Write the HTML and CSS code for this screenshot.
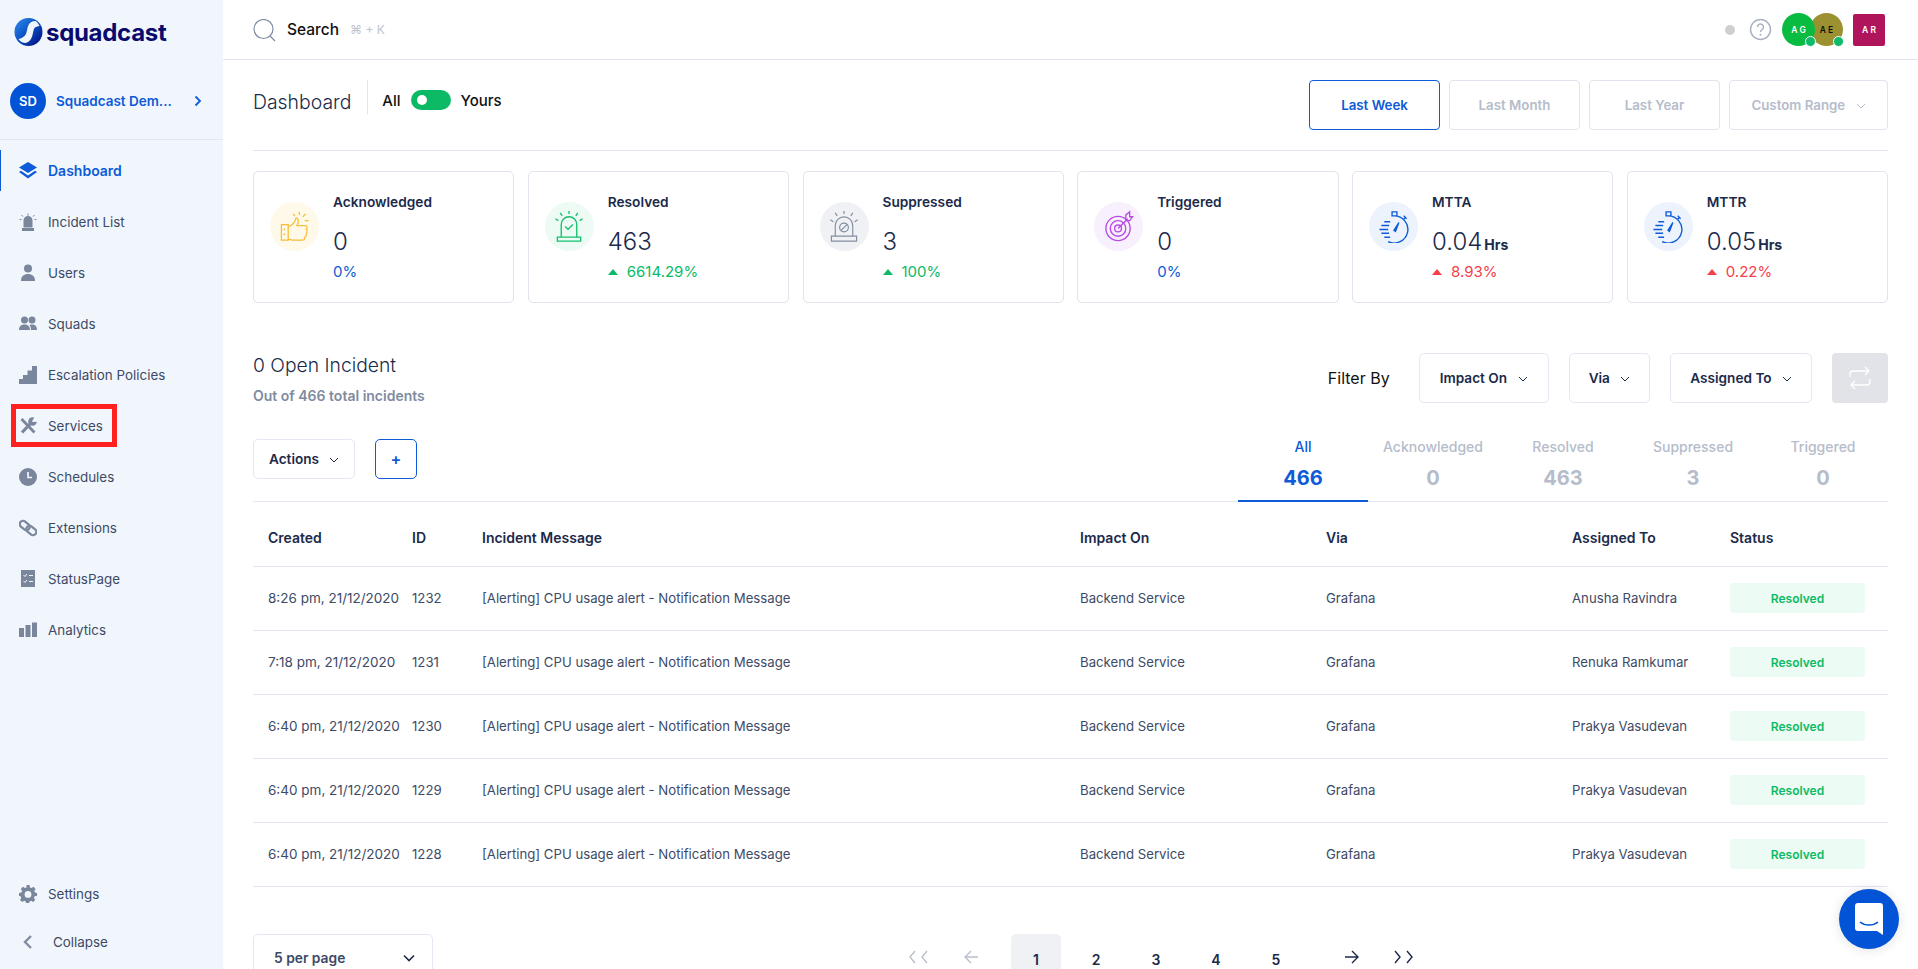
FILE: index.html
```html
<!DOCTYPE html>
<html>
  <head>
    <meta charset="UTF-8" />
    <title>Squadcast Dashboard</title>
    <link rel="stylesheet" href="styles.css">
  </head>
  <body>
    <div class="app">
      <aside class="sidebar">
        <div class="logo">
          <svg class="logo-mark" viewBox="0 0 28 28" width="29" height="28">
            <defs>
              <linearGradient id="logoFill" x1="0" y1="0" x2="1" y2="1">
                <stop offset="0" stop-color="#2f8df0" />
                <stop offset="0.5" stop-color="#0a4fc0" />
                <stop offset="1" stop-color="#06057a" />
              </linearGradient>
            </defs>
            <circle cx="14" cy="14" r="14" fill="url(#logoFill)" />
            <path d="M21 3c-5 0-7 3-8 7s-1 6-3 8-5 3-6 3c2 3 5 4 7 4 4-1 6-4 7-8s1-6 2-7 3-2 5-2c-1-2-2-4-4-5z" fill="#f1f6fd" />
          </svg>
          <span class="logo-text">squadcast</span>
        </div>

        <div class="org">
          <span class="org-avatar">SD</span>
          <span class="org-name">Squadcast Dem...</span>
          <svg class="org-arrow" viewBox="0 0 8 12" width="8" height="12"><path d="M1.5 1.5 6 6l-4.5 4.500" fill="none" stroke="#0d5bd7" stroke-width="1.8" /></svg>
        </div>

        <nav class="nav">
          <a class="nav-item active">
            <svg viewBox="0 0 18 18" width="18" height="18"><path d="M9 0 18 5.5 9 11 0 5.5z" /><path d="M2 8.800 0 10 9 16.500 18 10l-2-1.200L9 13.500z" /></svg>
            Dashboard
          </a>
          <a class="nav-item">
            <svg viewBox="0 0 18 18" width="18" height="18"><path d="M4.500 7.500a4.500 4.500 0 0 1 9 0V14.500h-9zM3 15h12v3H3z" /><path d="M9 .5v2.200M2.500 2l1.500 1.600M15.500 2 14 3.600M.5 6.500h2M15.500 6.500h2" stroke="#7a869c" fill="none" /></svg>
            Incident List
          </a>
          <a class="nav-item">
            <svg viewBox="0 0 18 18" width="18" height="18"><circle cx="9" cy="4.500" r="4" /><path d="M2 17c0-5 3-7 7-7s7 2 7 7z" /></svg>
            Users
          </a>
          <a class="nav-item">
            <svg viewBox="0 0 18 18" width="18" height="18"><circle cx="5.500" cy="5" r="3.500" /><circle cx="13" cy="5" r="3.500" /><path d="M0 15c0-4 2.500-5.500 5.500-5.500S11 11 11 15zM12 15c0-2-.5-3.800-1.500-5 .8-.4 1.600-.5 2.500-.5 3 0 5 1.500 5 5.500z" /></svg>
            Squads
          </a>
          <a class="nav-item">
            <svg viewBox="0 0 18 18" width="18" height="18"><path d="M13 0h5v18H0v-5h4V9h4.500V4.500H13z" /></svg>
            Escalation Policies
          </a>
          <a class="nav-item boxed">
            <svg viewBox="0 0 18 18" width="18" height="18"><path d="M2.500 2 15.500 15.500" fill="none" stroke="#7a869c" stroke-width="2.800" /><path d="M3 15.500 12 6" fill="none" stroke="#7a869c" stroke-width="3.200" /><circle cx="13.500" cy="4.500" r="4.300" /><path d="M12.800 4.800 15.500 0 19 1 17.500 5z" fill="#f1f6fd" /></svg>
            Services
          </a>
          <a class="nav-item">
            <svg viewBox="0 0 18 18" width="18" height="18"><circle cx="9" cy="9" r="9" /><path d="M9 4v5.500h4" fill="none" stroke="#f1f6fd" stroke-width="1.700" /></svg>
            Schedules
          </a>
          <a class="nav-item">
            <svg viewBox="0 0 18 18" width="18" height="18"><rect x="0.200" y="3.200" width="11" height="6.600" rx="3.300" transform="rotate(40 5.700 6.500)" fill="none" stroke="#7a869c" stroke-width="2.200" /><rect x="6.800" y="8.200" width="11" height="6.600" rx="3.300" transform="rotate(40 12.300 11.500)" fill="none" stroke="#7a869c" stroke-width="2.200" /></svg>
            Extensions
          </a>
          <a class="nav-item">
            <svg viewBox="0 0 18 18" width="18" height="18"><path d="M2 0h14v17H2z" /><path d="M4.500 5 6 6.500 8 4M4.500 11 6 12.500 8 10M10 5.500h4M10 11.500h4" fill="none" stroke="#f1f6fd" /></svg>
            StatusPage
          </a>
          <a class="nav-item">
            <svg viewBox="0 0 18 18" width="18" height="18"><path d="M0 7h5v9H0zM6.500 4h5v12h-5zM13 1.500h5V16h-5z" /></svg>
            Analytics
          </a>
        </nav>

        <div class="sidebar-foot">
          <a class="nav-item">
            <svg viewBox="0 0 18 18" width="18" height="18"><path fill-rule="evenodd" d="M7.500 0h3l.4 2.400 1.500.7 2.100-1.300 2.100 2.100-1.300 2.100.7 1.500L18 7.900v3l-2.400.4-.7 1.500 1.300 2.100-2.100 2.100-2.100-1.300-1.500.7-.4 2.400h-3l-.4-2.400-1.500-.7-2.100 1.300-2.100-2.100 1.300-2.100-.7-1.500L0 10.900v-3l2.400-.4.700-1.500-1.300-2.100 2.100-2.100 2.100 1.300 1.500-.7zM9 6a3.400 3.400 0 1 0 0 6.800A3.400 3.400 0 0 0 9 6z" /></svg>
            Settings
          </a>
          <a class="nav-item collapse">
            <svg viewBox="0 0 10 14" width="10" height="14"><path d="M8 1 2 7l6 6" fill="none" stroke="#848d9e" stroke-width="2.400" /></svg>
            Collapse
          </a>
        </div>
      </aside>

      <main class="main">
        <header class="topbar">
          <svg class="search-icon" viewBox="0 0 23 23" width="23" height="23"><circle cx="10.500" cy="10" r="9.500" fill="none" stroke="#7f8ca3" stroke-width="1.200" /><path d="m17 17 5 5" stroke="#7f8ca3" stroke-width="1.200" /></svg>
          <span class="search-label">Search</span>
          <span class="search-hint">⌘ + K</span>
          <div class="topbar-right">
            <span class="status-dot"></span>
            <svg class="help" viewBox="0 0 23 23" width="23" height="23"><circle cx="11.500" cy="11.500" r="10" fill="none" stroke="#aab2c2" stroke-width="1.500" /><path d="M8.500 9a3 3 0 1 1 4.600 2.500c-1 .7-1.600 1.200-1.600 2.500" fill="none" stroke="#aab2c2" stroke-width="1.500" /><circle cx="11.500" cy="16.800" r="1" fill="#aab2c2" /></svg>
            <div class="avatars">
              <span class="avatar green">A G<i class="online"></i></span>
              <span class="avatar olive">A E<i class="online"></i></span>
            </div>
            <span class="avatar square">A R</span>
          </div>
        </header>

        <div class="content">
          <div class="page-head">
            <h1>Dashboard</h1>
            <div class="scope">
              <span>All</span>
              <span class="switch"></span>
              <span>Yours</span>
            </div>
            <div class="ranges">
              <button class="range selected">Last Week</button>
              <button class="range">Last Month</button>
              <button class="range">Last Year</button>
              <button class="range custom">Custom Range <svg class="chev" viewBox="0 0 10 6" width="10" height="6"><path d="m1 1 4 4 4-4" fill="none" stroke="#b5bccb" /></svg></button>
            </div>
          </div>

          <section class="cards">
            <div class="card">
              <span class="card-icon yellow">
                <svg viewBox="0 0 30 34" width="30" height="34" fill="none" stroke="#f7bd35" stroke-width="1.300"><path d="M1 15h7v16H1zM8 17c4-1 7-4 8-9 2 0 3 2 2 6l-1 2h9c2 0 2 4 0 4 2 0 2 4 0 4 1 0 1 4-1 4 0 3-1 3-3 3H12l-4-1M4 19v2M4 24v2M19 2l1 3M26 4l-3 3M29 11h-4M13 4l2 2" /></svg>
              </span>
              <div class="card-body">
                <div class="card-title">Acknowledged</div>
                <div class="card-value">0</div>
                <div class="card-delta blue">0%</div>
              </div>
            </div>
            <div class="card">
              <span class="card-icon green">
                <svg viewBox="0 0 30 34" width="30" height="34" fill="none" stroke="#12c06d" stroke-width="1.400"><path d="M7 28V15a8 8 0 0 1 16 0v13M3 28h24v4H3zM15 1v3M6 3l2 3M24 3l-2 3M1 9l3 2M29 9l-3 2M11 17l3 3 5-5" /></svg>
              </span>
              <div class="card-body">
                <div class="card-title">Resolved</div>
                <div class="card-value">463</div>
                <div class="card-delta up"><i class="tri"></i>6614.29%</div>
              </div>
            </div>
            <div class="card">
              <span class="card-icon grey">
                <svg viewBox="0 0 30 34" width="30" height="34" fill="none" stroke="#838da0" stroke-width="1.200"><path d="M6 27V16a9 9 0 0 1 18 0v11M2 27h26v5H2zM15 1v3M6 3l2 3M24 3l-2 3M1 10l3 2M29 10l-3 2M11.800 21.200l6.400-6.400" /><circle cx="15" cy="18" r="4.500" /></svg>
              </span>
              <div class="card-body">
                <div class="card-title">Suppressed</div>
                <div class="card-value">3</div>
                <div class="card-delta up"><i class="tri"></i>100%</div>
              </div>
            </div>
            <div class="card">
              <span class="card-icon purple">
                <svg viewBox="0 0 30 34" width="30" height="34" fill="none" stroke="#b84be8" stroke-width="1.400"><circle cx="14" cy="19" r="12.500" /><circle cx="14" cy="19" r="8" /><circle cx="14" cy="19" r="3.500" /><path d="m14 19 10-10M22 11V5l4-3v5h3l-3 4z" /></svg>
              </span>
              <div class="card-body">
                <div class="card-title">Triggered</div>
                <div class="card-value">0</div>
                <div class="card-delta blue">0%</div>
              </div>
            </div>
            <div class="card">
              <span class="card-icon sky">
                <svg viewBox="0 0 32 34" width="32" height="34" fill="none" stroke="#0d5bd7" stroke-width="1.400"><path d="M16 6a14 14 0 1 1-6 26.500M14 2h5v4h-5zM26 6l3 3M25.500 10l2-2" /><path d="M6 12h6M3 16h8M1 20h9M3 24h8M6 28h6" stroke-width="1.500" /><path d="m21 13-5 8 1.500 1z" fill="#0d5bd7" /></svg>
              </span>
              <div class="card-body">
                <div class="card-title">MTTA</div>
                <div class="card-value">0.04<small>Hrs</small></div>
                <div class="card-delta down"><i class="tri"></i>8.93%</div>
              </div>
            </div>
            <div class="card">
              <span class="card-icon sky">
                <svg viewBox="0 0 32 34" width="32" height="34" fill="none" stroke="#0d5bd7" stroke-width="1.400"><path d="M16 6a14 14 0 1 1-6 26.500M14 2h5v4h-5zM26 6l3 3M25.500 10l2-2" /><path d="M6 12h6M3 16h8M1 20h9M3 24h8M6 28h6" stroke-width="1.500" /><path d="m21 13-5 8 1.500 1z" fill="#0d5bd7" /></svg>
              </span>
              <div class="card-body">
                <div class="card-title">MTTR</div>
                <div class="card-value">0.05<small>Hrs</small></div>
                <div class="card-delta down"><i class="tri"></i>0.22%</div>
              </div>
            </div>
          </section>

          <section class="incidents-head">
            <div>
              <h2>0 Open Incident</h2>
              <p>Out of 466 total incidents</p>
            </div>
            <div class="filters">
              <span class="filter-label">Filter By</span>
              <button class="filter impact">Impact On <svg class="chev" viewBox="0 0 10 6" width="10" height="6"><path d="m1 1 4 4 4-4" fill="none" stroke="#1c2a4a" /></svg></button>
              <button class="filter">Via <svg class="chev" viewBox="0 0 10 6" width="10" height="6"><path d="m1 1 4 4 4-4" fill="none" stroke="#1c2a4a" /></svg></button>
              <button class="filter">Assigned To <svg class="chev" viewBox="0 0 10 6" width="10" height="6"><path d="m1 1 4 4 4-4" fill="none" stroke="#1c2a4a" /></svg></button>
              <button class="refresh">
                <svg viewBox="0 0 22 24" width="22" height="24" fill="none" stroke="#fff" stroke-width="1.300"><path d="M1 11V8a3 3 0 0 1 3-3h16M16 1l4 4-4 4M21 13v3a3 3 0 0 1-3 3H2M6 15l-4 4 4 4" /></svg>
              </button>
            </div>
          </section>

          <section class="tabs-row">
            <div class="actions">
              <button class="filter small">Actions <svg class="chev" viewBox="0 0 10 6" width="10" height="6"><path d="m1 1 4 4 4-4" fill="none" stroke="#1c2a4a" /></svg></button>
              <button class="add">+</button>
            </div>
            <div class="tabs">
              <div class="tab current"><span>All</span><b>466</b></div>
              <div class="tab"><span>Acknowledged</span><b>0</b></div>
              <div class="tab"><span>Resolved</span><b>463</b></div>
              <div class="tab"><span>Suppressed</span><b>3</b></div>
              <div class="tab"><span>Triggered</span><b>0</b></div>
            </div>
          </section>

          <table class="incidents">
            <thead>
              <tr>
                <th class="col-created">Created</th>
                <th class="col-id">ID</th>
                <th class="col-message">Incident Message</th>
                <th class="col-impact">Impact On</th>
                <th class="col-via">Via</th>
                <th class="col-assigned">Assigned To</th>
                <th class="col-status">Status</th>
              </tr>
            </thead>
            <tbody>
              <tr>
                <td>8:26 pm, 21/12/2020</td><td>1232</td><td>[Alerting] CPU usage alert - Notification Message</td><td>Backend Service</td><td>Grafana</td><td>Anusha Ravindra</td><td><span class="pill">Resolved</span></td>
              </tr>
              <tr>
                <td>7:18 pm, 21/12/2020</td><td>1231</td><td>[Alerting] CPU usage alert - Notification Message</td><td>Backend Service</td><td>Grafana</td><td>Renuka Ramkumar</td><td><span class="pill">Resolved</span></td>
              </tr>
              <tr>
                <td>6:40 pm, 21/12/2020</td><td>1230</td><td>[Alerting] CPU usage alert - Notification Message</td><td>Backend Service</td><td>Grafana</td><td>Prakya Vasudevan</td><td><span class="pill">Resolved</span></td>
              </tr>
              <tr>
                <td>6:40 pm, 21/12/2020</td><td>1229</td><td>[Alerting] CPU usage alert - Notification Message</td><td>Backend Service</td><td>Grafana</td><td>Prakya Vasudevan</td><td><span class="pill">Resolved</span></td>
              </tr>
              <tr>
                <td>6:40 pm, 21/12/2020</td><td>1228</td><td>[Alerting] CPU usage alert - Notification Message</td><td>Backend Service</td><td>Grafana</td><td>Prakya Vasudevan</td><td><span class="pill">Resolved</span></td>
              </tr>
            </tbody>
          </table>

          <div class="table-foot">
            <button class="per-page">5 per page <svg viewBox="0 0 12 8" width="12" height="8"><path d="m1 1.500 5 5 5-5" fill="none" stroke="#1c2a4a" stroke-width="1.600" /></svg></button>
            <div class="pager">
              <span class="pager-arrow first">
                <svg viewBox="0 0 22 14" width="22" height="14" fill="none" stroke="#b9bfcc" stroke-width="1.400"><path d="M7 1 2 7l5 6M19 1l-5 6 5 6" /></svg>
              </span>
              <span class="pager-arrow prev">
                <svg viewBox="0 0 16 14" width="16" height="14" fill="none" stroke="#b9bfcc" stroke-width="1.400"><path d="M8 1 2 7l6 6M2 7h13" /></svg>
              </span>
              <span class="page current">1</span>
              <span class="page">2</span>
              <span class="page">3</span>
              <span class="page">4</span>
              <span class="page">5</span>
              <span class="pager-arrow next">
                <svg viewBox="0 0 16 14" width="16" height="14" fill="none" stroke="#1c2a4a" stroke-width="1.400"><path d="m8 1 6 6-6 6M1 7h13" /></svg>
              </span>
              <span class="pager-arrow last">
                <svg viewBox="0 0 22 14" width="22" height="14" fill="none" stroke="#1c2a4a" stroke-width="1.400"><path d="m3 1 5 6-5 6M15 1l5 6-5 6" /></svg>
              </span>
            </div>
          </div>
        </div>
      </main>
    </div>

    <button class="chat">
      <svg viewBox="0 0 28 32" width="28" height="32"><path fill-rule="evenodd" d="M3 0h22a3 3 0 0 1 3 3v29l-6-4H3a3 3 0 0 1-3-3V3a3 3 0 0 1 3-3z" fill="#fff" /><path d="M5 19c5 4 13 4 18 0" fill="none" stroke="#0353d6" stroke-width="1.600" /></svg>
    </button>
  </body>
</html>
```

FILE: styles.css
```css
* {
  box-sizing: border-box;
}

html,
body {
  margin: 0;
  height: 100%;
  overflow: hidden;
}

body {
  font-family: Inter, "Liberation Sans", sans-serif;
  font-size: 14px;
  color: #1c2a4a;
  background-color: #fff;
}

button {
  font-family: inherit;
  cursor: pointer;
}

.app {
  display: flex;
  height: 969px;
}

/* Sidebar */
.sidebar {
  width: 223px;
  flex-shrink: 0;
  display: flex;
  flex-direction: column;
  background-color: #f1f6fd;
}

.logo {
  display: flex;
  align-items: center;
  height: 59px;
  padding: 5px 0 0 14px;
  gap: 3px;
}

.logo-text {
  font-size: 24px;
  font-weight: 700;
  color: #0a0a6e;
  letter-spacing: -0.3px;
}

.org {
  display: flex;
  align-items: center;
  height: 81px;
  padding: 4px 0 0 10px;
  border-bottom: 1px solid #e1e7f0;
}

.org-avatar {
  width: 36px;
  height: 36px;
  border-radius: 50%;
  background-color: #0353d6;
  color: #fff;
  font-size: 13px;
  font-weight: 600;
  display: flex;
  align-items: center;
  justify-content: center;
}

.org-name {
  margin-left: 10px;
  width: 140px;
  font-weight: 600;
  font-size: 13.5px;
  color: #0d5bd7;
  white-space: nowrap;
}

.org-arrow {
  margin-left: -2px;
}

.nav {
  flex: 1;
  padding-top: 10px;
}

.nav-item {
  display: flex;
  align-items: center;
  gap: 11px;
  height: 41px;
  margin-bottom: 10px;
  padding-left: 19px;
  color: #3d4a66;
  fill: #7a869c;
  font-size: 13.4px;
  white-space: nowrap;
  position: relative;
}

.nav-item.active {
  color: #0d5bd7;
  fill: #0d5bd7;
  font-size: 14px;
  font-weight: 600;
  border-left: 1px solid #0d5bd7;
  padding-left: 18px;
}

/* the red annotation drawn on top of the screenshot */
.nav-item.boxed::after {
  content: "";
  position: absolute;
  left: 11px;
  top: -1px;
  width: 96px;
  height: 33px;
  border: 5px solid #ff2020;
}

.sidebar-foot .nav-item {
  margin-bottom: 7px;
}

.collapse {
  gap: 20px;
  padding-left: 23px;
}

/* Top bar */
.main {
  flex: 1;
  min-width: 0;
}

.topbar {
  display: flex;
  align-items: center;
  height: 60px;
  padding: 0 30px;
  border-bottom: 1px solid #e1e4ec;
}

.search-icon {
  margin-top: 2px;
}

.search-label {
  margin-left: 11px;
  font-size: 15.5px;
  font-weight: 500;
  color: #111;
}

.search-hint {
  margin-left: 11px;
  font-size: 12px;
  color: #bdc3d0;
}

.topbar-right {
  margin-left: auto;
  display: flex;
  align-items: center;
}

.status-dot {
  width: 10px;
  height: 10px;
  border-radius: 50%;
  background-color: #cfcfcf;
}

.help {
  margin-left: 14px;
}

.avatars {
  display: flex;
  margin-left: 10px;
}

.avatar {
  position: relative;
  width: 33px;
  height: 33px;
  display: flex;
  align-items: center;
  justify-content: center;
  font-size: 8.5px;
  font-weight: 600;
  color: #fff;
  border-radius: 50%;
  white-space: nowrap;
}

.avatar.green {
  background-color: #09bb40;
  z-index: 1;
}

.avatar.olive {
  background-color: #9b9130;
  color: #111;
  margin-left: -5px;
}

.avatar.square {
  background-color: #b0145a;
  border-radius: 2px;
  margin-left: 10px;
  width: 32px;
  height: 32px;
  margin-right: 3px;
}

.online {
  position: absolute;
  right: -1px;
  bottom: -1px;
  width: 11px;
  height: 11px;
  border-radius: 50%;
  background-color: #0fba6a;
  border: 1.5px solid #fff;
}

/* Page head */
.content {
  padding: 0 30px;
}

.page-head {
  display: flex;
  align-items: center;
  height: 91px;
  border-bottom: 1px solid #e1e4ec;
}

h1 {
  margin: 0 0 16px;
  padding: 11px 16px 0 0;
  border-right: 1px solid #e1e4ec;
  font-size: 19.4px;
  line-height: 22px;
  font-weight: 300;
  color: #1c2a4a;
  height: 34px;
}

.scope {
  display: flex;
  align-items: center;
  gap: 10px;
  margin-left: 14px;
  margin-bottom: 10px;
  font-size: 15px;
  font-weight: 500;
  color: #111;
}

.switch {
  position: relative;
  width: 40px;
  height: 20px;
  border-radius: 10px;
  background-color: #0cba66;
}

.switch::before {
  content: "";
  position: absolute;
  left: 6px;
  top: 5px;
  width: 10px;
  height: 10px;
  border-radius: 50%;
  background-color: #fff;
}

.ranges {
  margin-left: auto;
  display: flex;
  gap: 9px;
}

.range {
  width: 131px;
  height: 50px;
  background-color: #fff;
  border: 1px solid #e1e4ec;
  border-radius: 4px;
  color: #b5bccb;
  font-size: 13.3px;
  font-weight: 600;
}

.range.selected {
  border-color: #0d5bd7;
  color: #0d5bd7;
}

.range.custom {
  width: 159px;
}

.chev {
  margin-left: 7px;
  vertical-align: middle;
}

/* Stat cards */
.cards {
  display: grid;
  grid-template-columns: repeat(6, 1fr);
  gap: 13.5px;
  margin-top: 20px;
}

.card {
  display: flex;
  height: 132px;
  padding: 30px 15px 0 16px;
  border: 1px solid #dfe3ec;
  border-radius: 5px;
}

.card-icon {
  flex-shrink: 0;
  width: 49px;
  height: 49px;
  border-radius: 50%;
  display: flex;
  align-items: center;
  justify-content: center;
}

.card-icon svg {
  height: 33px;
}

.card-icon.yellow {
  background-color: #fff9ea;
}

.card-icon.green {
  background-color: #eefbf4;
}

.card-icon.grey {
  background-color: #f0f1f4;
}

.card-icon.purple {
  background-color: #f8f0fd;
}

.card-icon.sky {
  background-color: #edf3fc;
}

.card-body {
  margin-left: 14px;
  margin-top: -8px;
}

.card-title {
  font-size: 13.7px;
  font-weight: 600;
  line-height: 17px;
  color: #1c2a4a;
}

.card-value {
  height: 30px;
  margin-top: 16px;
  font-size: 24px;
  font-weight: 300;
  line-height: 30px;
  color: #1c2a4a;
}

.card-value small {
  margin-left: 2px;
  font-size: 14px;
  font-weight: 700;
  line-height: 1;
}

.card-delta {
  display: flex;
  align-items: center;
  margin-top: 5px;
  font-size: 15px;
  line-height: 20px;
}

.card-delta.blue {
  color: #0d5bd7;
}

.card-delta.up {
  color: #0cba66;
}

.card-delta.down {
  color: #f5404b;
}

.tri {
  width: 0;
  height: 0;
  margin-right: 9px;
  border-left: 5px solid transparent;
  border-right: 5px solid transparent;
  border-bottom: 6px solid currentColor;
}

/* Incident section */
.incidents-head {
  display: flex;
  justify-content: space-between;
  margin-top: 49px;
}

h2 {
  margin: 0;
  font-size: 19.3px;
  line-height: 26px;
  font-weight: 300;
}

.incidents-head p {
  margin: 9px 0 0;
  font-size: 14px;
  font-weight: 600;
  color: #808ba0;
}

.filters {
  display: flex;
  align-items: center;
  gap: 20px;
  height: 50px;
  margin-top: 1px;
}

.filter-label {
  font-size: 16px;
  color: #111;
  margin-right: 9px;
}

.filter {
  height: 50px;
  padding: 0 19px;
  background-color: #fff;
  border: 1px solid #e4e8f2;
  border-radius: 5px;
  color: #1c2a4a;
  font-size: 13.6px;
  font-weight: 600;
  white-space: nowrap;
}

.filter.impact {
  min-width: 130px;
}

.filter.small {
  height: 40px;
  padding: 0 15px;
  width: 102px;
}

.refresh {
  width: 56px;
  height: 50px;
  border: none;
  border-radius: 4px;
  background-color: #e1e3e8;
  display: flex;
  align-items: center;
  justify-content: center;
}

.tabs-row {
  display: flex;
  justify-content: space-between;
  height: 98px;
  border-bottom: 1px solid #e4e8f2;
}

.actions {
  display: flex;
  gap: 20px;
  margin-top: 35px;
}

.add {
  width: 42px;
  height: 40px;
  background-color: #fff;
  border: 1px solid #0d5bd7;
  border-radius: 5px;
  color: #0d5bd7;
  font-size: 16px;
  font-weight: 600;
}

.tabs {
  display: flex;
}

.tab {
  width: 130px;
  display: flex;
  flex-direction: column;
  align-items: center;
  padding-top: 34px;
  color: #b5bccb;
  height: 98px;
}

.tab span {
  font-size: 14px;
  font-weight: 500;
  line-height: 18px;
}

.tab b {
  margin-top: 10px;
  font-size: 20px;
  line-height: 24px;
  font-weight: 700;
}

.tab.current {
  color: #0d5bd7;
  border-bottom: 2px solid #0d5bd7;
}

/* Table */
.incidents {
  width: 100%;
  border-collapse: collapse;
  table-layout: fixed;
}

.incidents th {
  height: 64px;
  padding: 8px 0 0 15px;
  text-align: left;
  font-size: 14px;
  font-weight: 600;
  color: #1c2a4a;
  border-bottom: 1px solid #e4e8f2;
}

.incidents td {
  height: 64px;
  padding: 0 0 0 15px;
  font-size: 13.2px;
  color: #3d4a66;
  border-bottom: 1px solid #e4e8f2;
  white-space: nowrap;
}

.incidents td:first-child {
  font-size: 13.5px;
}

.col-created {
  width: 144px;
}

.col-id {
  width: 70px;
}

.col-message {
  width: 598px;
}

.col-impact {
  width: 246px;
}

.col-via {
  width: 246px;
}

.col-assigned {
  width: 158px;
}

.pill {
  display: flex;
  align-items: center;
  justify-content: center;
  width: 135px;
  height: 30px;
  border-radius: 4px;
  background-color: #ecfbf3;
  color: #0cba66;
  font-size: 12px;
  font-weight: 600;
}

/* Footer */
.table-foot {
  display: flex;
  margin-top: 47px;
}

.per-page {
  display: flex;
  align-items: center;
  justify-content: space-between;
  width: 180px;
  height: 50px;
  padding: 0 17px 2px 20px;
  background-color: #fff;
  border: 1px solid #e4e8f2;
  border-radius: 5px;
  color: #3d4a66;
  font-size: 13.8px;
  font-weight: 600;
}

.pager {
  display: flex;
  align-items: flex-start;
  margin-left: 475px;
}

.pager-arrow {
  display: flex;
  align-items: center;
  height: 48px;
  padding-bottom: 2px;
}

.pager-arrow.first {
  width: 55px;
}

.pager-arrow.prev {
  width: 48px;
}

.pager-arrow.next {
  margin-left: 33px;
  width: 48px;
}

.page {
  width: 50px;
  margin-right: 10px;
  height: 50px;
  line-height: 52px;
  text-align: center;
  font-size: 14px;
  font-weight: 600;
  border-radius: 5px 5px 0 0;
}

.page.current {
  background-color: #f0f1f4;
}

.chat {
  position: absolute;
  left: 1839px;
  top: 889px;
  width: 60px;
  height: 60px;
  border: none;
  border-radius: 50%;
  background-color: #0353d6;
  box-shadow: 0 1px 12px rgba(0, 0, 0, 0.12);
  display: flex;
  align-items: center;
  justify-content: center;
}
```
